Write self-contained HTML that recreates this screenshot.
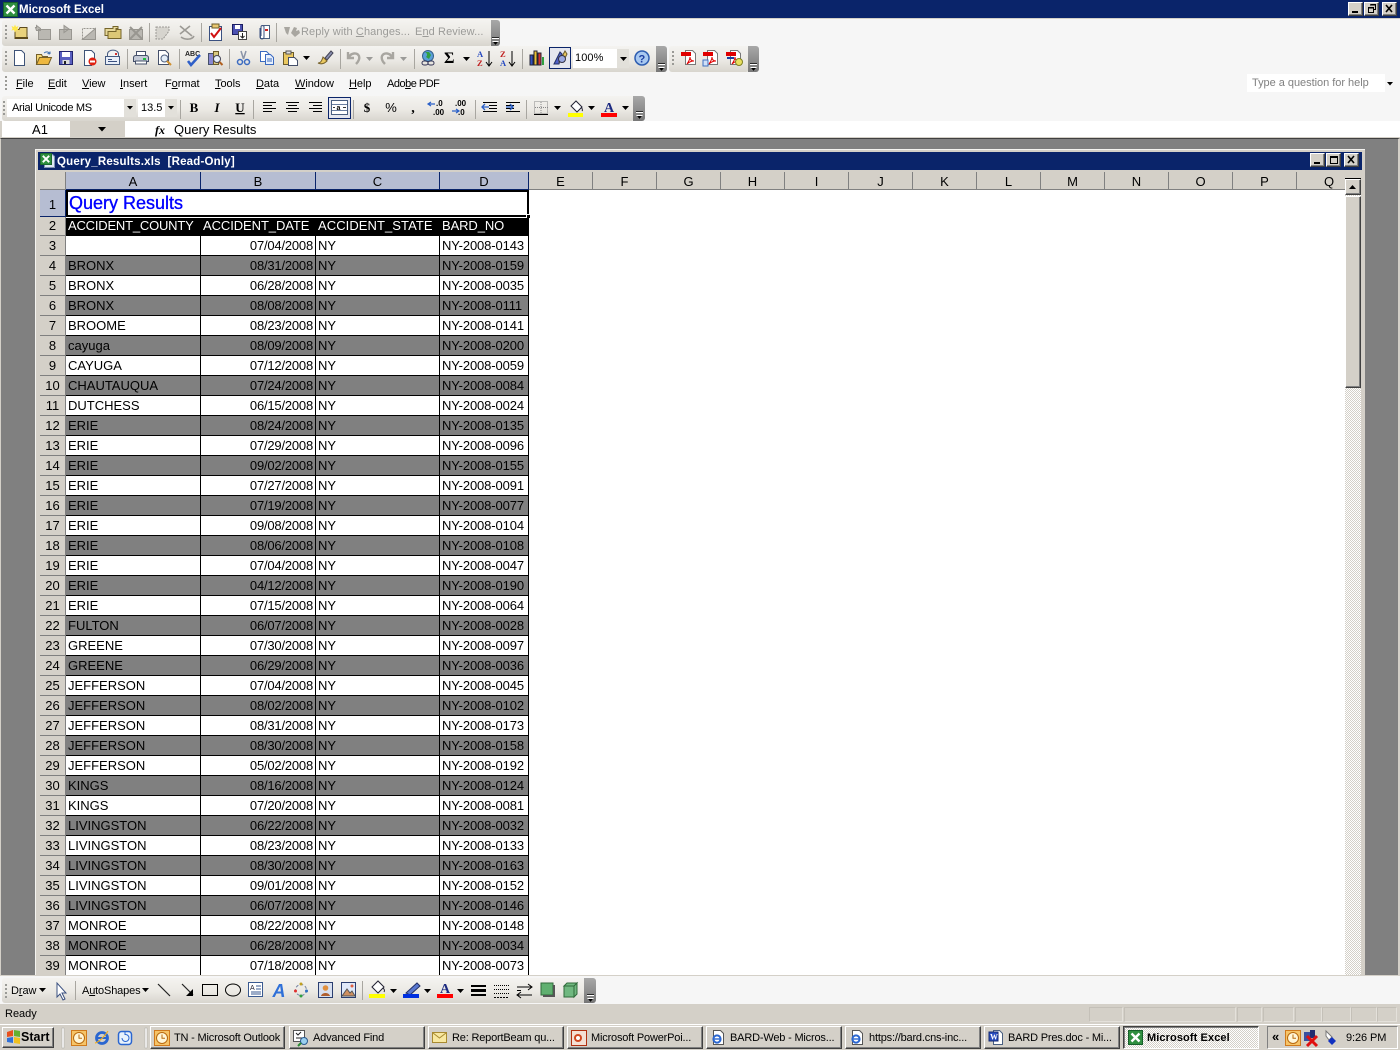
<!DOCTYPE html>
<html><head><meta charset="utf-8"><title>Microsoft Excel</title>
<style>
*{margin:0;padding:0;box-sizing:border-box}
html,body{width:1400px;height:1050px;overflow:hidden;background:#808080;font-family:"Liberation Sans",sans-serif;color:#000}
.a{position:absolute;white-space:nowrap}
.tb{position:absolute;border-radius:3px;background:linear-gradient(#f4f3f0,#ebe9e4 55%,#d8d5ce)}
.h{position:absolute;border-radius:0 3px 3px 0;background:linear-gradient(#a8a8a8,#777)}
.m{position:absolute;top:78px;font-size:11px;line-height:13px;white-space:nowrap;letter-spacing:-.05px}
.t11{font-size:11px;line-height:13px}
.ch{position:absolute;top:172px;height:18px;font-size:13px;line-height:19px;text-align:center;background:#d4d0c8;border-right:1px solid #808080;border-bottom:1px solid #808080}
.sel{background:#b6bdd2;border-right:1px solid #0a246a;border-bottom:1px solid #0a246a}
#g{position:absolute;left:40px;top:236px;width:489px;height:739px;overflow:hidden}
.r{display:flex;height:20px;font-size:13px;line-height:19px;background:#fff}
.r.d{background:#808080}
.r>*{display:block;font-style:normal;font-weight:400;text-decoration:none;border-bottom:1px solid #000;border-right:1px solid #000;white-space:nowrap;overflow:hidden}
.r b{width:26px;background:#d4d0c8;text-align:center;border-right:1px solid #808080;border-bottom:1px solid #808080}
.r i{width:135px;padding-left:2px}
.r u{width:115px;text-align:right;padding-right:2px;letter-spacing:-.2px}
.r s{width:124px;padding-left:2px}
.r em{width:89px;padding-left:2px;letter-spacing:-.12px}
.btn{position:absolute;background:#d4d0c8;border-top:1px solid #fff;border-left:1px solid #fff;border-right:1px solid #404040;border-bottom:1px solid #404040;box-shadow:inset -1px -1px #808080}
.task{position:absolute;top:1026px;height:23px;background:#d4d0c8;border-top:1px solid #fff;border-left:1px solid #fff;border-right:1px solid #404040;border-bottom:1px solid #404040;box-shadow:inset -1px -1px #808080;font-size:11px;line-height:22px;padding-left:23px;white-space:nowrap;overflow:hidden;letter-spacing:-.18px}
.pn{position:absolute;top:1007px;height:15px;border:1px solid #e4e1db;border-top-color:#c4c0b8;border-left-color:#c4c0b8}
svg{position:absolute;left:0;top:0}
</style></head><body>
<!-- top chrome -->
<div class="a" style="left:0;top:0;width:1400px;height:18px;background:#0a246a"></div>
<div class="a" style="left:0;top:18px;width:1400px;height:103px;background:#f6f6f6;border-top:1px solid #d4d0c8"></div>
<div class="a" style="left:19px;top:3px;color:#fff;font-weight:700;font-size:11.5px;line-height:14px">Microsoft Excel</div>
<div class="tb" style="left:2px;top:20px;width:490px;height:26px"></div><div class="h" style="left:491px;top:20px;width:9px;height:26px"></div>
<div class="tb" style="left:2px;top:46px;width:656px;height:26px"></div><div class="h" style="left:656px;top:46px;width:11px;height:26px"></div>
<div class="tb" style="left:669px;top:46px;width:80px;height:26px"></div><div class="h" style="left:748px;top:46px;width:11px;height:26px"></div>
<div class="tb" style="left:2px;top:96px;width:632px;height:25px"></div><div class="h" style="left:633px;top:96px;width:12px;height:25px"></div>
<div class="a t11" style="left:301px;top:26px;color:#9b9b98;letter-spacing:.1px">Reply with <span style="text-decoration:underline">C</span>hanges...</div>
<div class="a t11" style="left:415px;top:26px;color:#9b9b98;letter-spacing:.1px">E<span style="text-decoration:underline">n</span>d Review...</div>
<div class="a" style="left:573px;top:49px;width:56px;height:19px;background:#fff"></div>
<div class="a" style="left:617px;top:49px;width:12px;height:19px;background:#e2e0da"></div>
<div class="a t11" style="left:575px;top:52px;letter-spacing:.1px">100%</div>
<div class="a" style="left:549px;top:47px;width:22px;height:22px;background:#e4e6ee;border:1px solid #0a246a"></div>
<span class="m" style="left:16px"><span style="text-decoration:underline">F</span>ile</span>
<span class="m" style="left:48px"><span style="text-decoration:underline">E</span>dit</span>
<span class="m" style="left:82px"><span style="text-decoration:underline">V</span>iew</span>
<span class="m" style="left:120px"><span style="text-decoration:underline">I</span>nsert</span>
<span class="m" style="left:165px">F<span style="text-decoration:underline">o</span>rmat</span>
<span class="m" style="left:215px"><span style="text-decoration:underline">T</span>ools</span>
<span class="m" style="left:256px"><span style="text-decoration:underline">D</span>ata</span>
<span class="m" style="left:295px"><span style="text-decoration:underline">W</span>indow</span>
<span class="m" style="left:349px"><span style="text-decoration:underline">H</span>elp</span>
<span class="m" style="left:387px;letter-spacing:-.5px">Ado<span style="text-decoration:underline">b</span>e PDF</span>
<div class="a" style="left:1247px;top:74px;width:151px;height:18px;background:#fff"></div>
<div class="a" style="left:1385px;top:74px;width:13px;height:18px;background:#f6f6f6"></div>
<div class="a t11" style="left:1252px;top:77px;color:#808080;letter-spacing:-.03px">Type a question for help</div>
<div class="a" style="left:7px;top:99px;width:129px;height:18px;background:#fff"></div>
<div class="a" style="left:124px;top:99px;width:12px;height:18px;background:#e2e0da"></div>
<div class="a" style="left:138px;top:99px;width:39px;height:18px;background:#fff"></div>
<div class="a" style="left:165px;top:99px;width:12px;height:18px;background:#e2e0da"></div>
<div class="a t11" style="left:12px;top:102px;letter-spacing:-.33px">Arial Unicode MS</div>
<div class="a t11" style="left:141px;top:102px;width:22px;overflow:hidden">13.5</div>
<div class="a" style="left:328px;top:97px;width:23px;height:22px;background:#e4e6ee;border:1px solid #0a246a"></div>
<!-- formula bar -->
<div class="a" style="left:0;top:121px;width:1400px;height:17px;background:#d4d0c8"></div>
<div class="a" style="left:2px;top:121px;width:68px;height:16px;background:#fff;text-align:center;font-size:13px;line-height:18px;padding-left:8px">A1</div>
<div class="a" style="left:125px;top:121px;width:1275px;height:16px;background:#fff;font-size:13px;line-height:18px;padding-left:49px">Query Results</div>
<div class="a" style="left:155px;top:123px;font:italic 700 12px/14px 'Liberation Serif',serif"><i>fx</i></div>
<!-- MDI -->
<div class="a" style="left:0;top:138px;width:1400px;height:838px;background:#808080;border-top:1px solid #404040;border-left:1px solid #d4d0c8;border-right:2px solid #d4d0c8"></div>
<div class="a" style="left:35px;top:149px;width:1330px;height:827px;background:#d4d0c8;border-left:1px solid #f4f3f0;border-top:1px solid #f4f3f0"></div>
<div class="a" style="left:38px;top:152px;width:1324px;height:18px;background:#0a246a"></div>
<div class="a" style="left:57px;top:155px;color:#fff;font-weight:700;font-size:11.5px;line-height:14px;letter-spacing:.2px;white-space:pre">Query_Results.xls  [Read-Only]</div>
<div class="a" style="left:40px;top:172px;width:1305px;height:804px;background:#fff"></div>
<!-- headers -->
<div class="ch" style="left:40px;width:26px"></div>
<div class="ch sel" style="left:66px;width:135px">A</div>
<div class="ch sel" style="left:201px;width:115px">B</div>
<div class="ch sel" style="left:316px;width:124px">C</div>
<div class="ch sel" style="left:440px;width:89px">D</div>
<div class="ch" style="left:529px;width:64px">E</div>
<div class="ch" style="left:593px;width:64px">F</div>
<div class="ch" style="left:657px;width:64px">G</div>
<div class="ch" style="left:721px;width:64px">H</div>
<div class="ch" style="left:785px;width:64px">I</div>
<div class="ch" style="left:849px;width:64px">J</div>
<div class="ch" style="left:913px;width:64px">K</div>
<div class="ch" style="left:977px;width:64px">L</div>
<div class="ch" style="left:1041px;width:64px">M</div>
<div class="ch" style="left:1105px;width:64px">N</div>
<div class="ch" style="left:1169px;width:64px">O</div>
<div class="ch" style="left:1233px;width:64px">P</div>
<div class="ch" style="left:1297px;width:48px;border-right:0;padding-left:16px">Q</div>
<!-- row 1, 2 -->
<div class="a" style="left:40px;top:190px;width:26px;height:27px;background:#b6bdd2;border-right:1px solid #0a246a;border-bottom:1px solid #0a246a;text-align:center;font-size:13px;line-height:29px">1</div>
<div class="a" style="left:66px;top:190px;width:463px;height:27px;background:#fff;border:2px solid #000;font-size:18px;line-height:23px;color:#00f;padding-left:1px;-webkit-text-stroke:.35px #00f">Query Results</div>
<div class="a" style="left:526px;top:214px;width:5px;height:5px;background:#000;border:1px solid #fff"></div>
<div class="a" style="left:40px;top:217px;width:26px;height:19px;background:#d4d0c8;border-right:1px solid #808080;border-bottom:1px solid #808080;text-align:center;font-size:13px;line-height:18px">2</div>
<div class="a" style="left:66px;top:218px;width:463px;height:18px;background:#000;color:#fff;font-size:13px;line-height:15px">
<span class="a" style="left:2px;top:0;letter-spacing:-.2px">ACCIDENT_COUNTY</span><span class="a" style="left:137px;top:0;letter-spacing:-.08px">ACCIDENT_DATE</span><span class="a" style="left:252px;top:0;letter-spacing:.07px">ACCIDENT_STATE</span><span class="a" style="left:376px;top:0;letter-spacing:-.1px">BARD_NO</span></div>
<div id="g">
<div class="r"><b>3</b><i></i><u>07/04/2008</u><s>NY</s><em>NY-2008-0143</em></div>
<div class="r d"><b>4</b><i>BRONX</i><u>08/31/2008</u><s>NY</s><em>NY-2008-0159</em></div>
<div class="r"><b>5</b><i>BRONX</i><u>06/28/2008</u><s>NY</s><em>NY-2008-0035</em></div>
<div class="r d"><b>6</b><i>BRONX</i><u>08/08/2008</u><s>NY</s><em>NY-2008-0111</em></div>
<div class="r"><b>7</b><i>BROOME</i><u>08/23/2008</u><s>NY</s><em>NY-2008-0141</em></div>
<div class="r d"><b>8</b><i>cayuga</i><u>08/09/2008</u><s>NY</s><em>NY-2008-0200</em></div>
<div class="r"><b>9</b><i>CAYUGA</i><u>07/12/2008</u><s>NY</s><em>NY-2008-0059</em></div>
<div class="r d"><b>10</b><i>CHAUTAUQUA</i><u>07/24/2008</u><s>NY</s><em>NY-2008-0084</em></div>
<div class="r"><b>11</b><i>DUTCHESS</i><u>06/15/2008</u><s>NY</s><em>NY-2008-0024</em></div>
<div class="r d"><b>12</b><i>ERIE</i><u>08/24/2008</u><s>NY</s><em>NY-2008-0135</em></div>
<div class="r"><b>13</b><i>ERIE</i><u>07/29/2008</u><s>NY</s><em>NY-2008-0096</em></div>
<div class="r d"><b>14</b><i>ERIE</i><u>09/02/2008</u><s>NY</s><em>NY-2008-0155</em></div>
<div class="r"><b>15</b><i>ERIE</i><u>07/27/2008</u><s>NY</s><em>NY-2008-0091</em></div>
<div class="r d"><b>16</b><i>ERIE</i><u>07/19/2008</u><s>NY</s><em>NY-2008-0077</em></div>
<div class="r"><b>17</b><i>ERIE</i><u>09/08/2008</u><s>NY</s><em>NY-2008-0104</em></div>
<div class="r d"><b>18</b><i>ERIE</i><u>08/06/2008</u><s>NY</s><em>NY-2008-0108</em></div>
<div class="r"><b>19</b><i>ERIE</i><u>07/04/2008</u><s>NY</s><em>NY-2008-0047</em></div>
<div class="r d"><b>20</b><i>ERIE</i><u>04/12/2008</u><s>NY</s><em>NY-2008-0190</em></div>
<div class="r"><b>21</b><i>ERIE</i><u>07/15/2008</u><s>NY</s><em>NY-2008-0064</em></div>
<div class="r d"><b>22</b><i>FULTON</i><u>06/07/2008</u><s>NY</s><em>NY-2008-0028</em></div>
<div class="r"><b>23</b><i>GREENE</i><u>07/30/2008</u><s>NY</s><em>NY-2008-0097</em></div>
<div class="r d"><b>24</b><i>GREENE</i><u>06/29/2008</u><s>NY</s><em>NY-2008-0036</em></div>
<div class="r"><b>25</b><i>JEFFERSON</i><u>07/04/2008</u><s>NY</s><em>NY-2008-0045</em></div>
<div class="r d"><b>26</b><i>JEFFERSON</i><u>08/02/2008</u><s>NY</s><em>NY-2008-0102</em></div>
<div class="r"><b>27</b><i>JEFFERSON</i><u>08/31/2008</u><s>NY</s><em>NY-2008-0173</em></div>
<div class="r d"><b>28</b><i>JEFFERSON</i><u>08/30/2008</u><s>NY</s><em>NY-2008-0158</em></div>
<div class="r"><b>29</b><i>JEFFERSON</i><u>05/02/2008</u><s>NY</s><em>NY-2008-0192</em></div>
<div class="r d"><b>30</b><i>KINGS</i><u>08/16/2008</u><s>NY</s><em>NY-2008-0124</em></div>
<div class="r"><b>31</b><i>KINGS</i><u>07/20/2008</u><s>NY</s><em>NY-2008-0081</em></div>
<div class="r d"><b>32</b><i>LIVINGSTON</i><u>06/22/2008</u><s>NY</s><em>NY-2008-0032</em></div>
<div class="r"><b>33</b><i>LIVINGSTON</i><u>08/23/2008</u><s>NY</s><em>NY-2008-0133</em></div>
<div class="r d"><b>34</b><i>LIVINGSTON</i><u>08/30/2008</u><s>NY</s><em>NY-2008-0163</em></div>
<div class="r"><b>35</b><i>LIVINGSTON</i><u>09/01/2008</u><s>NY</s><em>NY-2008-0152</em></div>
<div class="r d"><b>36</b><i>LIVINGSTON</i><u>06/07/2008</u><s>NY</s><em>NY-2008-0146</em></div>
<div class="r"><b>37</b><i>MONROE</i><u>08/22/2008</u><s>NY</s><em>NY-2008-0148</em></div>
<div class="r d"><b>38</b><i>MONROE</i><u>06/28/2008</u><s>NY</s><em>NY-2008-0034</em></div>
<div class="r"><b>39</b><i>MONROE</i><u>07/18/2008</u><s>NY</s><em>NY-2008-0073</em></div>
</div>
<!-- scrollbar -->
<div class="a" style="left:1345px;top:172px;width:16px;height:804px;background:repeating-conic-gradient(#d4d0c8 0 25%,#fff 0 50%) 0 0/2px 2px"></div>
<div class="a" style="left:1345px;top:172px;width:16px;height:7px;background:#d4d0c8;border-bottom:1px solid #000"></div>
<div class="btn" style="left:1345px;top:179px;width:16px;height:16px"></div>
<div class="btn" style="left:1345px;top:196px;width:16px;height:192px"></div>
<!-- window buttons -->
<div class="btn" style="left:1348px;top:2px;width:15px;height:14px"></div>
<div class="btn" style="left:1364px;top:2px;width:15px;height:14px"></div>
<div class="btn" style="left:1382px;top:2px;width:15px;height:14px"></div>
<div class="btn" style="left:1310px;top:153px;width:15px;height:14px"></div>
<div class="btn" style="left:1326px;top:153px;width:15px;height:14px"></div>
<div class="btn" style="left:1344px;top:153px;width:15px;height:14px"></div>
<!-- bottom -->
<div class="a" style="left:0;top:975px;width:1400px;height:29px;background:#f6f6f6;border-top:1px solid #d4d0c8"></div>
<div class="tb" style="left:2px;top:978px;width:584px;height:25px"></div><div class="h" style="left:584px;top:978px;width:12px;height:25px"></div>
<div class="a t11" style="left:11px;top:985px;letter-spacing:-.1px">D<span style="text-decoration:underline">r</span>aw</div>
<div class="a t11" style="left:82px;top:985px;letter-spacing:-.15px">A<span style="text-decoration:underline">u</span>toShapes</div>
<div class="a" style="left:0;top:1004px;width:1400px;height:20px;background:#d4d0c8"></div>
<div class="a t11" style="left:5px;top:1008px">Ready</div>
<div class="pn" style="left:1089px;width:34px"></div><div class="pn" style="left:1124px;width:112px"></div><div class="pn" style="left:1237px;width:25px"></div><div class="pn" style="left:1263px;width:31px"></div><div class="pn" style="left:1295px;width:27px"></div><div class="pn" style="left:1322px;width:29px"></div><div class="pn" style="left:1351px;width:26px"></div><div class="pn" style="left:1377px;width:20px"></div>
<div class="a" style="left:0;top:1024px;width:1400px;height:26px;background:#d4d0c8;border-top:1px solid #fff"></div>
<div class="btn" style="left:2px;top:1027px;width:52px;height:21px"></div>
<div class="a" style="left:21px;top:1030px;font-weight:700;font-size:12.5px;line-height:15px">Start</div>
<div class="task" style="left:150px;width:135px">TN - Microsoft Outlook</div>
<div class="task" style="left:289px;width:136px">Advanced Find</div>
<div class="task" style="left:428px;width:136px">Re: ReportBeam qu...</div>
<div class="task" style="left:567px;width:136px">Microsoft PowerPoi...</div>
<div class="task" style="left:706px;width:136px">BARD-Web - Micros...</div>
<div class="task" style="left:845px;width:136px">https://bard.cns-inc...</div>
<div class="task" style="left:984px;width:136px">BARD Pres.doc - Mi...</div>
<div class="task" style="left:1123px;width:136px;border-top:1px solid #404040;border-left:1px solid #404040;border-right:1px solid #fff;border-bottom:1px solid #fff;box-shadow:inset 1px 1px #808080;background:repeating-conic-gradient(#d4d0c8 0 25%,#fff 0 50%) 0 0/2px 2px;font-weight:700;line-height:23px;letter-spacing:.1px">Microsoft Excel</div>
<div class="a" style="left:1267px;top:1026px;width:131px;height:23px;border:1px solid;border-color:#808080 #fff #fff #808080"></div>
<div class="a t11" style="left:1346px;top:1032px;letter-spacing:-.1px">9:26 PM</div>
<div class="a" style="left:1272px;top:1029px;font-size:13px;line-height:15px;font-weight:700">«</div>
<svg width="1400" height="1050" viewBox="0 0 1400 1050" xmlns="http://www.w3.org/2000/svg">
<defs>
<path id="t" d="M0 0h7l-3.5 4z" fill="#000"/>
<path id="gt" d="M0 0h7l-3.5 4z" fill="#9b9b98"/>
<g id="gr"><rect x="0" y="0" width="2" height="2" fill="#9a9a96"/><rect x="0" y="4" width="2" height="2" fill="#9a9a96"/><rect x="0" y="8" width="2" height="2" fill="#9a9a96"/><rect x="0" y="12" width="2" height="2" fill="#9a9a96"/></g>
<g id="hd"><rect x="0" y="0" width="7" height="1" fill="#fff"/><path d="M0 3h7l-3.5 4z" fill="#fff"/><rect x="0" y="-1" width="7" height="1" fill="#000" opacity=".7"/><path d="M1 4h5l-2.5 3z" fill="#000"/></g>
<g id="xl"><rect x=".5" y=".5" width="14" height="14" fill="#2f8f3f" stroke="#17602a"/><path d="M3.5 3.5l8 8M11.5 3.5l-8 8" stroke="#fff" stroke-width="2.4"/></g>
<g id="clock"><rect x=".5" y=".5" width="15" height="15" fill="#f6c468" stroke="#d07a1c"/><circle cx="8" cy="8" r="5.5" fill="#fff6d8" stroke="#b86a10"/><path d="M8 4.5v3.7h3" stroke="#b86a10" fill="none"/></g>
<g id="ie"><circle cx="8" cy="8" r="5.5" fill="none" stroke="#2a66d0" stroke-width="2.8"/><path d="M3 8h10" stroke="#2a66d0" stroke-width="2"/><path d="M1 13c4-1 10-7 13-12" stroke="#f0b020" stroke-width="1.2" fill="none"/></g>
<g id="iedoc"><path d="M3.5 .5h7l3 3v11h-10z" fill="#fff" stroke="#555"/><circle cx="7" cy="9" r="3.6" fill="none" stroke="#2a66d0" stroke-width="2"/><path d="M3.5 9h7" stroke="#2a66d0" stroke-width="1.4"/></g>
<g id="pdf"><path d="M4.5 .5h7l3 3v11h-10z" fill="#fff" stroke="#777"/><rect x="0" y="2" width="10" height="4" fill="#e00000"/><path d="M6 14c2-3 3-5 3-7 0 3 2 4 4 4-3 0-5 1-7 3z" fill="none" stroke="#e00000"/></g>
</defs>
<!-- window controls -->
<g fill="#000"><rect x="1352" y="11" width="6" height="2"/><rect x="1314" y="162" width="6" height="2"/>
<rect x="1330.5" y="156.5" width="7" height="7" fill="none" stroke="#000"/><rect x="1330" y="156" width="8" height="2"/></g>
<path d="M1386 5l6 7M1392 5l-6 7M1348 156l6 7M1354 156l-6 7" stroke="#000" stroke-width="1.6" fill="none"/>
<path d="M1370.5 4.500h5v5h-2M1368.500 7.500h5v5h-5z M1370 5h6M1369 8h4" fill="none" stroke="#000"/>
<path d="M1349 189h7l-3.500-4z" fill="#000"/>
<!-- excel icons -->
<use href="#xl" x="3" y="2"/>
<g transform="translate(40 153)"><path d="M4.500 1.500h8l2 2v11h-10z" fill="#dfe8f4" stroke="#7f93b4"/><use href="#xl" transform="scale(.8)"/></g>
<!-- row 1 -->
<use href="#gr" x="5" y="25"/>
<g transform="translate(12 24)"><path d="M3 5.500h4l1-2h7v11H3z" fill="#e9d27c" stroke="#5c4a1c"/><rect x="3" y="13" width="13" height="2" fill="#5c4a1c"/><path d="M3 .5l1 2.500 2.500-1-1 2.500 1 2-2.500-.5-1 2.500-1-2.500-2.500.5 1-2-1-2.500 2.500 1z" fill="#ffe84a"/></g>
<g fill="#bab8b2" stroke="#989690">
<path d="M36.500 30.500h4v-2l-4 -3v2h-1zM38.500 29.500h12v10h-12z"/>
<path d="M59.500 29.500h12v10h-12zM64 28.500v-3l5 3.500-5 3.500z"/>
<path d="M82.500 39.500l13-11v11z"/>
<path d="M129.500 29.500h13v10h-13z"/>
</g>
<path d="M82.500 39.500v-11h13" fill="none" stroke="#989690" stroke-dasharray="2 1"/>
<path d="M105 28.500h8v-2h5v2h-2v7h-11z" fill="#e6d89a" stroke="#75652b"/><path d="M108 31.500h8v-2h5v2 7h-13z" fill="#dcc876" stroke="#75652b"/>
<path d="M130 27l12 12M142 27l-12 12" stroke="#989690" stroke-width="2"/>
<path d="M156 27h13v4l-6 8h-7z" fill="#d6d4ce" stroke="#9c9a95" stroke-dasharray="2 1"/>
<path d="M180 26l12 10M190 26l-10 8M181 37c4 3 11 3 13-1" stroke="#9c9a95" stroke-width="1.600" fill="none"/>
<rect x="149" y="23" width="1" height="19" fill="#a8a6a0"/><rect x="201" y="23" width="1" height="19" fill="#a8a6a0"/><rect x="276" y="23" width="1" height="19" fill="#a8a6a0"/>
<path d="M209.500 26.500h12v14h-12z" fill="#fff" stroke="#3a5080"/><rect x="212" y="24" width="7" height="4" fill="#e8c870" stroke="#6a5a2a"/><path d="M211 33l3 4 7-9" stroke="#d01010" stroke-width="2" fill="none"/>
<g transform="translate(232 24)"><rect x=".5" y=".5" width="10" height="10" fill="#4a50b0" stroke="#1a1c60"/><rect x="3" y="1" width="5" height="4" fill="#fff"/><rect x="6.500" y="7.500" width="8" height="8" fill="#fff" stroke="#444"/><path d="M10.500 9v5M8.500 12l2 2 2-2" stroke="#222" fill="none"/></g>
<g transform="translate(255 24)"><path d="M8.500 1.500h6v13h-9v-6" fill="#fff" stroke="#4a5f80"/><rect x="10" y="5" width="3" height="2" fill="#d02020"/><path d="M5 4v9a2 2 0 0 0 4 0V3a1.500 1.500 0 0 0-3 0v9" fill="none" stroke="#3a5080"/></g>
<path d="M284 27l2 6 2 2 2-8zM291 33l3-6 3 1-1 3 3-1 1 3-5 4z" fill="#a8a6a0"/>
<use href="#hd" x="492" y="38"/>
<!-- row 2 -->
<use href="#gr" x="5" y="51"/>
<g transform="translate(11 50)"><path d="M3.500 .5h7l3 3v12h-10z" fill="#fff" stroke="#3f5478"/></g>
<g transform="translate(35 50)"><path d="M1.500 14.500v-10h5l1 2h5v2" fill="#f4d878" stroke="#75602a"/><path d="M1.500 14.500l3-7h12l-3 7z" fill="#eeb840" stroke="#75602a"/><path d="M9 3c3-2 5-1 6 1M15 4V1.500M15 4l-2.500-.5" stroke="#4070b0" fill="none"/></g>
<g transform="translate(58 50)"><rect x="1.500" y="1.500" width="13" height="13" fill="#5a60c0" stroke="#22246e"/><rect x="4" y="2" width="8" height="5" fill="#fff"/><rect x="4.500" y="10" width="7" height="4" fill="#ddd"/><rect x="6" y="11" width="2" height="3" fill="#222"/></g>
<g transform="translate(81 50)"><path d="M3.500 .5h7l3 3v6h-3v6h-7z" fill="#fff" stroke="#3f5478"/><circle cx="11.500" cy="11.500" r="4" fill="#e02010"/><rect x="9" y="10.500" width="5" height="2" fill="#fff"/></g>
<g transform="translate(104 50)"><path d="M4.500 7V4a5 3.500 0 0 1 11 0v3z" fill="#f2f2f2" stroke="#455a80" transform="translate(-1)"/><rect x="1.500" y="6.500" width="14" height="8" fill="#e8eef8" stroke="#455a80"/><path d="M4 9.500h4M4 11.500h9" stroke="#3a5080"/><rect x="11" y="3" width="2" height="2" fill="#d03030"/></g>
<rect x="127" y="49" width="1" height="20" fill="#a8a6a0"/><rect x="179" y="49" width="1" height="20" fill="#a8a6a0"/><rect x="229" y="49" width="1" height="20" fill="#a8a6a0"/><rect x="340" y="49" width="1" height="20" fill="#a8a6a0"/><rect x="414" y="49" width="1" height="20" fill="#a8a6a0"/><rect x="522" y="49" width="1" height="20" fill="#a8a6a0"/>
<g transform="translate(133 50)"><path d="M3.500 1.500h9v5h-9z" fill="#fff" stroke="#45506a"/><path d="M.5 7.500c0-1 1-2 2-2h11c1 0 2 1 2 2v4h-15z" fill="#c4cad6" stroke="#45506a"/><rect x="2.500" y="11" width="11" height="3" fill="#fff" stroke="#45506a"/><rect x="10" y="8" width="3" height="2" fill="#20c040"/></g>
<g transform="translate(156 50)"><path d="M2.500 .5h7l3 3v11h-10z" fill="#fff" stroke="#45506a"/><circle cx="8.500" cy="8.500" r="3.500" fill="#e4eef8" stroke="#506080"/><path d="M11 11l4 4" stroke="#d09030" stroke-width="2"/></g>
<text x="185" y="56" font-family="Liberation Sans,sans-serif" font-size="7" font-weight="700" fill="#222">ABC</text>
<path d="M188 61l3 4 9-10" stroke="#2f5fc8" stroke-width="2.600" fill="none"/>
<g transform="translate(207 50)"><rect x="1.500" y="3.500" width="5" height="11" fill="#8888d0" stroke="#45506a"/><rect x="6.500" y="1.500" width="5" height="13" fill="#d8ca80" stroke="#6a5a2a"/><circle cx="10" cy="9" r="3.500" fill="#e8f0f8" stroke="#445"/><path d="M12.500 12l3 3" stroke="#b06020" stroke-width="2"/></g>
<g transform="translate(235 50)" fill="none" stroke="#3a6ac0" stroke-width="1.500"><path d="M6 1l2.500 8M11 1L8.500 9" stroke="#8a94a8"/><circle cx="5" cy="12" r="2.500"/><circle cx="12" cy="12" r="2.500"/></g>
<g transform="translate(259 50)"><path d="M1.500 1.500h6l3 3v7h-9z" fill="#fff" stroke="#3a6ac0"/><path d="M6.500 4.500h5l3 3v7h-8z" fill="#e8f0fc" stroke="#3a6ac0"/><path d="M8 9h5M8 11h5" stroke="#3a6ac0"/></g>
<g transform="translate(282 50)"><rect x="1.500" y="2.500" width="10" height="12" fill="#eac860" stroke="#6a5a2a"/><rect x="4" y="1" width="5" height="3" fill="#ddd" stroke="#555"/><path d="M6.500 7.500h6l3 3v5h-9z" fill="#fff" stroke="#45506a"/></g>
<use href="#t" x="303" y="56"/>
<g transform="translate(317 50)"><path d="M8 8l6-7 2 2-6 7z" fill="#8a90b0" stroke="#445"/><path d="M1 13c3 0 4-3 5-6l4 4c-2 2-5 4-9 2z" fill="#eac860" stroke="#75602a"/></g>
<path d="M349 57c2-4 8-5 10-1 1 3-1 6-3 8M348 52v6h6" stroke="#a8a6a0" stroke-width="2.400" fill="none"/>
<use href="#gt" x="366" y="57"/>
<path d="M392 57c-2-4-8-5-10-1-1 3 1 6 3 8M393 52v6h-6" stroke="#a8a6a0" stroke-width="2.400" fill="none"/>
<use href="#gt" x="400" y="57"/>
<g transform="translate(420 50)"><circle cx="8" cy="6" r="5.500" fill="#5aa0d8" stroke="#35608a"/><path d="M5 2c2 1 3 3 1 5l3 2 2-4-2-3" fill="#30a040"/><rect x="2" y="11" width="6" height="4" rx="2" fill="none" stroke="#335" /><rect x="8" y="11" width="6" height="4" rx="2" fill="none" stroke="#335"/></g>
<text x="444" y="63" font-family="Liberation Serif,serif" font-size="16" font-weight="700" fill="#000">Σ</text>
<use href="#t" x="463" y="57"/>
<text x="477" y="57" font-family="Liberation Serif,serif" font-size="8.500" font-weight="700" fill="#2448c0">A</text><text x="477" y="66" font-family="Liberation Serif,serif" font-size="8.500" font-weight="700" fill="#c02020">Z</text>
<path d="M489 51v14M486 62l3 4 3-4" stroke="#000" fill="none"/>
<text x="500" y="57" font-family="Liberation Serif,serif" font-size="8.500" font-weight="700" fill="#c02020">Z</text><text x="500" y="66" font-family="Liberation Serif,serif" font-size="8.500" font-weight="700" fill="#2448c0">A</text>
<path d="M512 51v14M509 62l3 4 3-4" stroke="#000" fill="none"/>
<g transform="translate(529 50)"><rect x="1" y="5" width="3" height="10" fill="#3050c0" stroke="#223"/><rect x="5" y="1" width="3" height="14" fill="#e8c030" stroke="#223"/><rect x="9" y="3" width="3" height="12" fill="#d03030" stroke="#223"/><rect x="13" y="7" width="2" height="8" fill="#30a040"/></g>
<g transform="translate(552 50)"><path d="M2 14L8 2l2 2-3 10z" fill="#5060c8" stroke="#223066"/><path d="M7 12l6-11 2 3-4 8z" fill="#e8c860" stroke="#6a5a2a"/><circle cx="10" cy="9" r="3.500" fill="#9aa8e0" stroke="#334"/></g>
<use href="#t" x="620" y="57"/>
<circle cx="642" cy="58" r="7" fill="#a8c8f0" stroke="#2c5cb0" stroke-width="1.500"/>
<text x="638.500" y="62.500" font-family="Liberation Sans,sans-serif" font-size="11" font-weight="700" fill="#1c3ea0">?</text>
<use href="#hd" x="658" y="64"/>
<use href="#gr" x="672" y="51"/>
<use href="#pdf" x="681" y="50"/><use href="#pdf" x="703" y="50"/><rect x="703" y="60" width="5" height="6" fill="#cfe0f8" stroke="#4070c0"/>
<use href="#pdf" x="726" y="50"/><circle cx="739" cy="62" r="3.500" fill="#e8e060" stroke="#808020"/><path d="M727 58h7" stroke="#1c3ea0" stroke-width="2"/>
<use href="#hd" x="750" y="64"/>
<!-- menu & help -->
<use href="#gr" x="5" y="76"/>
<path d="M1387 82h6l-3 3.500z" fill="#000"/>
<!-- row 4 -->
<use href="#gr" x="3" y="101"/>
<path d="M127 106h6l-3 3.500zM168 106h6l-3 3.500z" fill="#000"/>
<rect x="180" y="100" width="1" height="19" fill="#a8a6a0"/><rect x="253" y="100" width="1" height="19" fill="#a8a6a0"/><rect x="353" y="100" width="1" height="19" fill="#a8a6a0"/><rect x="475" y="100" width="1" height="19" fill="#a8a6a0"/><rect x="526" y="100" width="1" height="19" fill="#a8a6a0"/>
<g font-family="Liberation Serif,serif" font-size="13" font-weight="700" text-anchor="middle"><text x="194" y="112">B</text><text x="217" y="112" font-style="italic">I</text><text x="240" y="112" style="text-decoration:underline">U</text></g>
<path d="M263 102.500h13M263 105.500h9M263 108.500h13M263 111.500h9M286 102.500h13M288 105.500h9M286 108.500h13M288 111.500h9M309 102.500h13M313 105.500h9M309 108.500h13M313 111.500h9" stroke="#000"/>
<g transform="translate(331 100)"><rect x=".5" y=".5" width="16" height="14" fill="#fff" stroke="#4a5f80"/><path d="M1 4.500h15M1 10.500h15" stroke="#6a7ea0"/><text x="5.500" y="10" font-family="Liberation Sans,sans-serif" font-size="7" font-weight="700">a</text><path d="M2 7.500h2M12 7.500h3" stroke="#333"/></g>
<g font-family="Liberation Sans,sans-serif" font-weight="700" text-anchor="middle"><text x="367" y="112" font-size="13" font-family="Liberation Serif,serif">$</text><text x="391" y="112" font-size="13" font-weight="400">%</text><text x="413" y="112" font-size="14" font-family="Liberation Serif,serif">,</text></g>
<g font-family="Liberation Sans,sans-serif" font-size="8" font-weight="700"><text x="436" y="106">.0</text><text x="433" y="115">.00</text><text x="455" y="106">.00</text><text x="458" y="115">.0</text></g>
<path d="M429 104h6M431 102l-3 2 3 2M452 111h6M456 109l3 2-3 2" stroke="#2a60c8" stroke-width="1.200" fill="none"/>
<path d="M483 102.500h14M489 105.500h8M489 108.500h8M483 111.500h14M506 102.500h14M506 105.500h8M506 108.500h8M506 111.500h14" stroke="#000"/>
<path d="M489 107h-7M485 104l-3 3 3 3M506 107h7M510 104l3 3-3 3" stroke="#2a60c8" stroke-width="1.300" fill="none"/>
<rect x="534.500" y="101.500" width="13" height="12" fill="none" stroke="#888" stroke-dasharray="1 1"/><path d="M541 102v12M535 107.500h13" stroke="#888" stroke-dasharray="1 1"/><path d="M534 114.500h14" stroke="#000"/>
<use href="#t" x="554" y="106"/>
<path d="M571 106l5-5 6 6-5 5zM581 107c1 1 2 3 1 4" fill="#fff" stroke="#223"/><rect x="568" y="113" width="15" height="4" fill="#ff0"/>
<use href="#t" x="588" y="106"/>
<text x="609" y="112" text-anchor="middle" font-family="Liberation Serif,serif" font-size="14" font-weight="700" fill="#1c2a80">A</text><rect x="601" y="113" width="16" height="4" fill="#f00"/>
<use href="#t" x="622" y="106"/>
<use href="#hd" x="636" y="112"/>
<path d="M98 127h8l-4 4.500z" fill="#000"/>
<!-- draw toolbar -->
<use href="#gr" x="5" y="984"/>
<use href="#t" x="39" y="988"/><use href="#t" x="142" y="988"/>
<path d="M57 983v14l3-3 3 6 2-1-3-6h4z" fill="#fff" stroke="#3a5080"/>
<rect x="75" y="981" width="1" height="19" fill="#a8a6a0"/><rect x="362" y="981" width="1" height="19" fill="#a8a6a0"/>
<path d="M158 984l12 12" stroke="#222" stroke-width="1.200"/>
<path d="M182 984l11 11" stroke="#222" stroke-width="1.200"/><path d="M186 996l7 0v-7z" fill="#000"/>
<rect x="202.500" y="984.500" width="15" height="11" fill="none" stroke="#000"/>
<ellipse cx="233" cy="990" rx="7.500" ry="6" fill="none" stroke="#000"/>
<g transform="translate(248 982)"><rect x=".5" y=".5" width="14" height="14" fill="#fff" stroke="#3a5a90"/><path d="M8 4h5M8 7h5M3 10h10M3 12h10" stroke="#3a5a90"/><text x="2" y="8" font-family="Liberation Sans,sans-serif" font-size="7" fill="#223">A</text></g>
<text x="279" y="997" text-anchor="middle" font-family="Liberation Sans,sans-serif" font-size="18" font-weight="700" font-style="italic" fill="#2f70d8">A</text>
<circle cx="301" cy="990" r="5.500" fill="none" stroke="#7080a0" stroke-dasharray="3 2"/><circle cx="301" cy="984" r="1.500" fill="#c0a020"/><circle cx="295.500" cy="991" r="1.500" fill="#e03030"/><circle cx="306.500" cy="991" r="1.500" fill="#3070c0"/><circle cx="301" cy="996" r="1.500" fill="#30a040"/>
<g transform="translate(318 982)"><rect x=".5" y=".5" width="14" height="15" fill="#d8e0f0" stroke="#2a3e70"/><circle cx="7.500" cy="6" r="2.800" fill="#e09040"/><path d="M3 14c1-4 8-4 9 0z" fill="#b06030"/></g>
<g transform="translate(341 982)"><rect x=".5" y=".5" width="14" height="15" fill="#dfe8f8" stroke="#2a3e70"/><path d="M1 14l5-7 3 4 2-2 3 5z" fill="#d09060" stroke="#555"/><circle cx="11" cy="4" r="1.500" fill="#e06040"/></g>
<path d="M372 987l6-6 6 6-6 6zM383 988c1 1 2 2 1 4" fill="#fff" stroke="#223"/><rect x="369" y="994" width="16" height="4" fill="#ff0"/>
<use href="#t" x="390" y="989"/>
<path d="M406 993l11-10 3 3-10 9z" fill="#5a78d0" stroke="#223066"/><rect x="403" y="994" width="16" height="4" fill="#0030e0"/>
<use href="#t" x="424" y="989"/>
<text x="445" y="993" text-anchor="middle" font-family="Liberation Serif,serif" font-size="14" font-weight="700" fill="#1c2a80">A</text><rect x="437" y="994" width="16" height="4" fill="#f00"/>
<use href="#t" x="457" y="989"/>
<rect x="471" y="985" width="15" height="2" fill="#000"/><rect x="471" y="989" width="15" height="3" fill="#000"/><rect x="471" y="994" width="15" height="2" fill="#000"/>
<path d="M494 985.500h15M494 989.500h15M494 993.500h15" stroke="#000" stroke-dasharray="1 1"/><path d="M494 997.500h15" stroke="#000" stroke-dasharray="2 1"/>
<path d="M517 987h15M528 984l4 3-4 3M517 995h15M521 992l-4 3 4 3M517 990.500h4" stroke="#000" fill="none"/>
<rect x="541" y="983" width="12" height="12" fill="#60b070" stroke="#2f6a3a"/><rect x="543" y="995" width="12" height="2" fill="#555"/><rect x="553" y="985" width="2" height="12" fill="#555"/>
<path d="M564 986h10v11h-10zM564 986l3-3h10l-3 3zM574 986l3-3v11l-3 3z" fill="#70b880" stroke="#2f6a3a"/>
<use href="#hd" x="587" y="995"/>
<!-- taskbar icons -->
<g transform="translate(7 1030)"><path d="M0 2l6-2v6l-6 1z" fill="#e8501c"/><path d="M7 0l6 1v6l-6-1z" fill="#64b030"/><path d="M0 8l6-1v6l-6-1z" fill="#3070d8"/><path d="M7 7l6 1v6l-6-1z" fill="#f0c020"/></g>
<rect x="62" y="1028" width="2" height="20" fill="#fff" stroke="#a8a6a0" stroke-width=".5"/><rect x="145" y="1028" width="2" height="20" fill="#fff" stroke="#a8a6a0" stroke-width=".5"/>
<use href="#clock" x="71" y="1030"/><use href="#ie" x="94" y="1030"/>
<g transform="translate(117 1030)"><rect x="1.500" y="1.500" width="13" height="13" rx="3" fill="#e8f2fc" stroke="#2a66d0" stroke-width="1.500"/><path d="M5 8a3.500 3.500 0 1 0 3.500-3.500M8 1v4" stroke="#2a66d0" fill="none"/></g>
<use href="#clock" x="154" y="1030"/>
<g transform="translate(293 1030)"><rect x=".5" y=".5" width="11" height="11" fill="#fff" stroke="#555"/><path d="M3 3l2 2 3-3M3 8h6" stroke="#222" fill="none"/><circle cx="11" cy="11" r="3.500" fill="#9ad0f0" stroke="#2a5a90"/><path d="M8 13l-3 3" stroke="#2a8a30" stroke-width="2"/></g>
<g transform="translate(432 1031)"><rect x=".5" y="1.500" width="14" height="10" fill="#f8e8a0" stroke="#a88a30"/><path d="M1 2l6.500 5 6.500-5" fill="none" stroke="#a88a30"/></g>
<g transform="translate(571 1030)"><rect x=".5" y=".5" width="15" height="15" fill="#f4e0d4" stroke="#b03010"/><circle cx="7" cy="8" r="4" fill="#d04820"/><circle cx="7" cy="8" r="2" fill="#fff"/></g>
<use href="#iedoc" x="710" y="1030"/><use href="#iedoc" x="849" y="1030"/>
<g transform="translate(988 1030)"><path d="M5.500 .5h6l3 3v11h-9z" fill="#fff" stroke="#4a5f80"/><rect x="1" y="2" width="9" height="9" fill="#2a4ec0" stroke="#142a70"/><text x="2" y="9.500" font-family="Liberation Serif,serif" font-size="8" font-weight="700" fill="#fff">W</text></g>
<use href="#xl" x="1128" y="1030"/>
<use href="#clock" x="1285" y="1030"/>
<g transform="translate(1303 1030)"><rect x="1" y="2" width="6" height="9" fill="#3a50a0"/><rect x="7" y="0" width="5" height="8" fill="#202a70"/><path d="M4 6l10 10M14 6L4 16" stroke="#e01010" stroke-width="3"/></g>
<g transform="translate(1323 1030)"><path d="M3 1l6 6-3 3-3-4z" fill="#fff" stroke="#777"/><path d="M9 7l4 4-4 4-4-4z" fill="#1030c0"/></g>
</svg>
</body></html>
